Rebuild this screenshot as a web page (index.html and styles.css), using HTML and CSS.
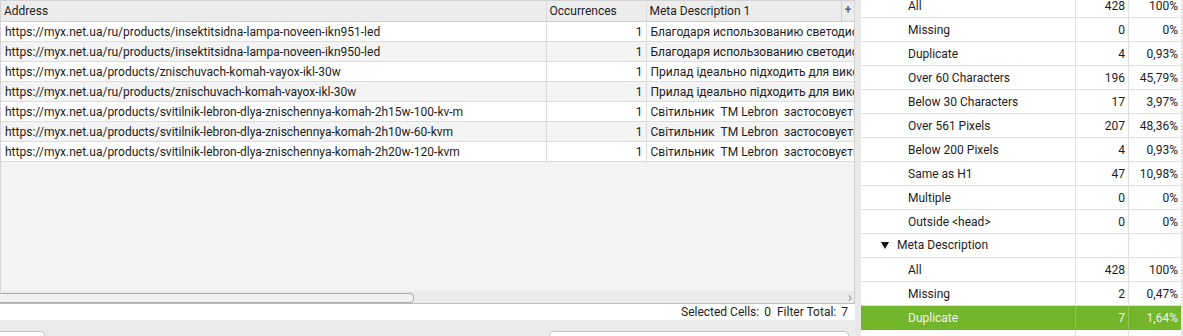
FILE: index.html
```html
<!DOCTYPE html>
<html>
    <head>
        <meta charset='utf-8'>
        <title>overview</title>
        <link rel="stylesheet" href="styles.css">
    </head>
    <body>
        <div class='main-panel'>
            <div class='grid-view'>
                <table class='grid'>
                    <colgroup>
                        <col class='col-address'>
                        <col class='col-occ'>
                        <col class='col-meta'>
                    </colgroup>
                    <thead>
                        <tr>
                            <td>Address</td>
                            <td>Occurrences</td>
                            <td class='meta-head'><span class='meta-title'>Meta Description 1</span><span class='col-ctrl'>+</span></td>
                        </tr>
                    </thead>
                    <tbody>
                        <tr>
                            <td>https://myx.net.ua/ru/products/insektitsidna-lampa-noveen-ikn951-led</td>
                            <td class='num'>1</td>
                            <td class='clip'>Благодаря использованию светодиодов</td>
                        </tr>
                        <tr>
                            <td>https://myx.net.ua/ru/products/insektitsidna-lampa-noveen-ikn950-led</td>
                            <td class='num'>1</td>
                            <td class='clip'>Благодаря использованию светодиодов</td>
                        </tr>
                        <tr>
                            <td>https://myx.net.ua/products/znischuvach-komah-vayox-ikl-30w</td>
                            <td class='num'>1</td>
                            <td class='clip'>Прилад ідеально підходить для використання</td>
                        </tr>
                        <tr>
                            <td>https://myx.net.ua/ru/products/znischuvach-komah-vayox-ikl-30w</td>
                            <td class='num'>1</td>
                            <td class='clip'>Прилад ідеально підходить для використання</td>
                        </tr>
                        <tr>
                            <td>https://myx.net.ua/products/svitilnik-lebron-dlya-znischennya-komah-2h15w-100-kv-m</td>
                            <td class='num'>1</td>
                            <td class='clip'>Світильник&nbsp; TM Lebron&nbsp; застосовується</td>
                        </tr>
                        <tr>
                            <td>https://myx.net.ua/products/svitilnik-lebron-dlya-znischennya-komah-2h10w-60-kvm</td>
                            <td class='num'>1</td>
                            <td class='clip'>Світильник&nbsp; TM Lebron&nbsp; застосовується</td>
                        </tr>
                        <tr>
                            <td>https://myx.net.ua/products/svitilnik-lebron-dlya-znischennya-komah-2h20w-120-kvm</td>
                            <td class='num'>1</td>
                            <td class='clip'>Світильник&nbsp; TM Lebron&nbsp; застосовується</td>
                        </tr>
                    </tbody>
                </table>
            </div>
            <div class='hscroll'>
                <div class='thumb'></div>
                <span class='arrow'>&#8250;</span>
            </div>
            <div class='status'>
                <span>Selected Cells:</span><span class='val'>0</span>
                <span class='gap'>Filter Total:</span><span class='val'>7</span>
            </div>
            <div class='toolbar'>
                <div class='field field-left'></div>
                <div class='field field-right'></div>
            </div>
        </div>
        <div class='side-panel'>
            <div class='tree'>
                <div class='row sub'><div class='label'>All</div><div class='count'>428</div><div class='pct'>100%</div></div>
                <div class='row sub'><div class='label'>Missing</div><div class='count'>0</div><div class='pct'>0%</div></div>
                <div class='row sub'><div class='label'>Duplicate</div><div class='count'>4</div><div class='pct'>0,93%</div></div>
                <div class='row sub'><div class='label'>Over 60 Characters</div><div class='count'>196</div><div class='pct'>45,79%</div></div>
                <div class='row sub'><div class='label'>Below 30 Characters</div><div class='count'>17</div><div class='pct'>3,97%</div></div>
                <div class='row sub'><div class='label'>Over 561 Pixels</div><div class='count'>207</div><div class='pct'>48,36%</div></div>
                <div class='row sub'><div class='label'>Below 200 Pixels</div><div class='count'>4</div><div class='pct'>0,93%</div></div>
                <div class='row sub'><div class='label'>Same as H1</div><div class='count'>47</div><div class='pct'>10,98%</div></div>
                <div class='row sub'><div class='label'>Multiple</div><div class='count'>0</div><div class='pct'>0%</div></div>
                <div class='row sub'><div class='label'>Outside &lt;head&gt;</div><div class='count'>0</div><div class='pct'>0%</div></div>
                <div class='row group'><div class='label'><span class='caret'></span>Meta Description</div><div class='count'></div><div class='pct'></div></div>
                <div class='row sub'><div class='label'>All</div><div class='count'>428</div><div class='pct'>100%</div></div>
                <div class='row sub'><div class='label'>Missing</div><div class='count'>2</div><div class='pct'>0,47%</div></div>
                <div class='row sub selected'><div class='label'>Duplicate</div><div class='count'>7</div><div class='pct'>1,64%</div></div>
                <div class='row sub'><div class='label'></div><div class='count'></div><div class='pct'></div></div>
            </div>
        </div>
    </body>
</html>
```

FILE: styles.css
```css
*{
    box-sizing: border-box;
}
body{
    margin: 0;
    width: 1183px;
    height: 336px;
    overflow: hidden;
    display: flex;
    background-color: #e9e9e9;
    font-family: Roboto, "Liberation Sans", sans-serif;
    font-size: 12px;
    color: #1d1d1d;
}

/* left: results grid */
.main-panel{
    width: 855px;
    height: 336px;
    display: flex;
    flex-direction: column;
}
.grid-view{
    height: 291px;
    background-color: #f3f3f3;
    border-top: 1px solid #d4d4d4;
    border-right: 1px solid #d4d4d4;
    border-left: 1px solid #d4d4d4;
    overflow: hidden;
}
.grid{
    border-collapse: collapse;
    table-layout: fixed;
    width: 853px;
}
.col-address{ width: 545px; }
.col-occ{ width: 100px; }
.col-meta{ width: 208px; }
.grid td{
    height: 20px;
    padding: 1px 3px 0 4px;
    white-space: nowrap;
    overflow: hidden;
    border: 1px solid #dcdcdc;
    border-left: none;
    line-height: 18px;
}
.grid thead td{
    height: 20px;
    background-color: #ececec;
    padding-left: 3px;
    border-top: none;
    border-bottom-color: #d0d0d0;
}
.grid tbody tr:nth-child(even) td{
    background-color: #f4f4f4;
}
.grid tbody tr:nth-child(odd) td{
    background-color: #ffffff;
}
.grid .num{
    text-align: right;
}
.grid td:last-child{
    border-right: none;
}
.grid .clip{
    text-overflow: clip;
}
.meta-head{
    position: relative;
}
.col-ctrl{
    position: absolute;
    right: 0;
    top: 0;
    width: 13px;
    height: 20px;
    border-left: 1px solid #d0d0d0;
    text-align: center;
    font-weight: bold;
    color: #666;
    line-height: 18px;
}

.hscroll{
    height: 13px;
    background-color: #ebebeb;
    border-right: 1px solid #c8c8c8;
    border-bottom: 1px solid #bdbdbd;
    display: flex;
    align-items: center;
    justify-content: space-between;
}
.thumb{
    width: 418px;
    height: 10px;
    margin-left: -4px;
    margin-top: 1px;
    border: 1px solid #a9a9a9;
    border-radius: 4px;
    background-color: #f1f1f1;
}
.arrow{
    color: #9c9c9c;
    font-size: 14px;
    line-height: 12px;
    margin-right: 2px;
}

.status{
    height: 16px;
    background-color: #ffffff;
    display: flex;
    justify-content: flex-end;
    align-items: center;
    padding-right: 7px;
}
.status .val{
    margin-left: 5px;
}
.status .gap{
    margin-left: 6px;
}

.toolbar{
    flex: 1;
    background-color: #ebebeb;
    position: relative;
}
.field{
    position: absolute;
    top: 11px;
    height: 20px;
    background-color: #ffffff;
    border: 1px solid #c3c3c3;
    border-radius: 4px;
}
.field-left{
    left: -6px;
    width: 51px;
}
.field-right{
    left: 549px;
    width: 300px;
}

/* right: overview tree */
.side-panel{
    margin-left: 6px;
    width: 320px;
    height: 336px;
    background-color: #ffffff;
    overflow: hidden;
}
.tree{
    margin-top: -6px;
}
.row{
    display: flex;
    height: 24px;
    border-bottom: 1px solid #e0e0e0;
    line-height: 25px;
}
.row .label{
    width: 215px;
    border-right: 1px solid #e0e0e0;
    padding-left: 47px;
    white-space: nowrap;
}
.row .count{
    width: 53px;
    border-right: 1px solid #e0e0e0;
    text-align: right;
    padding-right: 3px;
}
.row .pct{
    width: 52px;
    text-align: right;
    padding-right: 3px;
}
.row.group .label{
    padding-left: 20px;
    display: flex;
    align-items: center;
}
.caret{
    width: 0;
    height: 0;
    border-left: 4px solid transparent;
    border-right: 4px solid transparent;
    border-top: 7px solid #111;
    margin-right: 8px;
}
.row.selected{
    background-color: #73b52b;
    color: #f2f2f2;
    border-bottom-color: #73b52b;
}
.row.selected .label,
.row.selected .count{
    border-right-color: #8cc552;
}
```
